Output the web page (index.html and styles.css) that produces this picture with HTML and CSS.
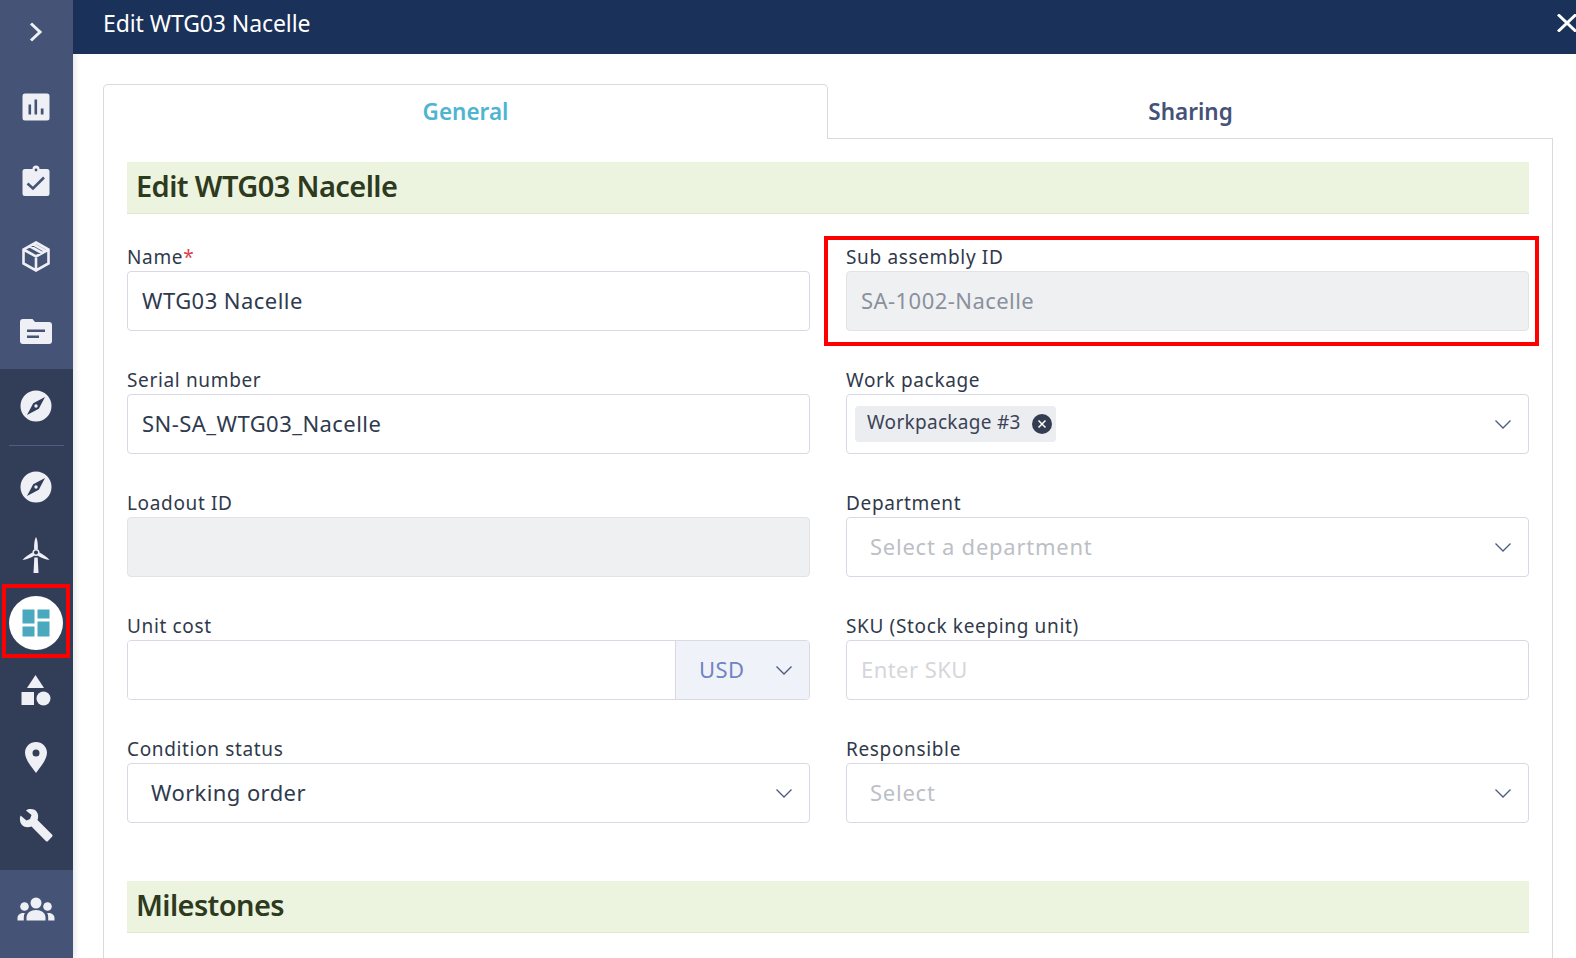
FILE: index.html
```html
<!DOCTYPE html>
<html lang="en">
<head>
<meta charset="utf-8">
<title>Edit WTG03 Nacelle</title>
<link rel="stylesheet" href="styles.css">
</head>
<body>
<div class="app">
  <nav class="sidebar">
    <div class="side-top">
      <div class="nav-toggle"><svg width="14" height="20" viewBox="0 0 14 20"><path d="M2 1.500 11 10 2 18.500" fill="none" stroke="#eef0f5" stroke-width="3"/></svg></div>
      <div class="nav-item"><svg width="28" height="28" viewBox="0 0 28 28"><rect x="0.5" y="0.5" width="27" height="27" rx="2.5" fill="#eef0f5"/><path d="M6.5 11.500h2.600v10H6.500zM12.500 6.500h2.600v15h-2.600zM18.800 15.500h2.700v6h-2.700z" fill="#455377"/></svg></div>
      <div class="nav-item nav-lift"><svg width="28" height="31" viewBox="0 0 28 31"><path d="M3 4h7.500a3.500 3.500 0 0 1 7 0H25a2.500 2.500 0 0 1 2.500 2.500v22A2.500 2.500 0 0 1 25 31H3a2.500 2.500 0 0 1-2.500-2.500v-22A2.500 2.500 0 0 1 3 4z" fill="#eef0f5"/><circle cx="14" cy="5" r="1.400" fill="#455377"/><path d="M5.500 18.500 11 23.500 22 12.500" fill="none" stroke="#455377" stroke-width="2.600"/></svg></div>
      <div class="nav-item"><svg width="28" height="31" viewBox="0 0 28 31"><path d="M14 1.500 26.500 8.500V22.500L14 29.500 1.500 22.500V8.500zM1.500 8.500 14 15.500 26.500 8.500M14 15.500V29.500M7.500 5 20 12M11 3.200 23.500 10.200" fill="none" stroke="#eef0f5" stroke-width="2.600"/></svg></div>
      <div class="nav-item"><svg width="32" height="25" viewBox="0 0 32 25"><path d="M3 0h9.500l2.500 3h14a3 3 0 0 1 3 3v16a3 3 0 0 1-3 3H3a3 3 0 0 1-3-3V3a3 3 0 0 1 3-3z" fill="#eef0f5"/><path d="M7 10.500h18v2.500H7zM7 16.500h12v2.500H7z" fill="#455377"/></svg></div>
    </div>
    <div class="side-mid">
      <div class="nav-item nav-first"><svg width="32" height="32" viewBox="0 0 32 32"><circle cx="16" cy="16" r="15.500" fill="#eef0f5"/><path d="M25 7 18.800 18.800 7 25 13.200 13.200z" fill="#323d58"/><circle cx="16" cy="16" r="1.700" fill="#eef0f5"/></svg></div>
      <div class="nav-sep"></div>
      <div class="nav-item nav-tight"><svg width="32" height="32" viewBox="0 0 32 32"><circle cx="16" cy="16" r="15.500" fill="#eef0f5"/><path d="M25 7 18.800 18.800 7 25 13.200 13.200z" fill="#323d58"/><circle cx="16" cy="16" r="1.700" fill="#eef0f5"/></svg></div>
      <div class="nav-item nav-tight"><svg width="28" height="36" viewBox="0 0 28 36"><path d="M14 0c1.800 3 2 9 1.800 12.500h-3.600C12 9 12.200 3 14 0zM27.500 23c-3.500-.3-8.500-2.400-11.700-4.300l1.800-3.100c3 2 7.500 4.400 9.900 7.400zM.5 23c2.400-3 6.900-5.400 9.900-7.400l1.800 3.100C9 20.600 4 22.700.5 23zM12.300 20.500h3.400l.8 15.500h-5z" fill="#eef0f5"/><circle cx="14" cy="15.500" r="2.800" fill="none" stroke="#eef0f5" stroke-width="1.500"/></svg></div>
      <div class="nav-item nav-tight">
        <div class="active-disc"><svg width="28" height="28" viewBox="0 0 28 28"><path d="M.5.500h12v14H.500zM15.500.500h12v9h-12zM15.500 12.500h12v15h-12zM.5 17.500h12v10H.500z" fill="#4aa8bf"/></svg></div>
        <div class="mark-nav"></div>
      </div>
      <div class="nav-item nav-tight nav-up"><svg width="30" height="31" viewBox="0 0 30 31"><path d="M14.500 0 23 13H6z" fill="#eef0f5"/><rect x="0.500" y="17" width="12.500" height="13" fill="#eef0f5"/><circle cx="22.500" cy="23.500" r="7" fill="#eef0f5"/></svg></div>
      <div class="nav-item nav-tight"><svg width="22" height="31" viewBox="0 0 22 31"><path fill-rule="evenodd" d="M11 0c6 0 11 4.600 11 10.800C22 17.500 15 25.500 11 31 7 25.500 0 17.500 0 10.800 0 4.600 5 0 11 0zm0 7.500a3.500 3.500 0 1 0 0 7 3.500 3.500 0 0 0 0-7z" fill="#eef0f5"/></svg></div>
      <div class="nav-item nav-tight"><svg width="34" height="34" viewBox="0 0 34 34"><path d="M1.500 7.500 7.500 12.500 11 11 12.500 7 7 2.500C10 .5 15 .5 17.500 3.500 19.500 6 19.500 9 18.500 12L33 26.500c.7.700.7 1.500 0 2.200L29 33c-.7.700-1.500.7-2.200 0L12.500 18.500C9 19.800 5.500 19.500 3 17 .8 14.500.3 10.500 1.500 7.500z" fill="#eef0f5"/></svg></div>
    </div>
    <div class="side-bottom">
      <svg width="38" height="24" viewBox="0 0 38 24"><circle cx="19" cy="6" r="5.500" fill="#eef0f5"/><path d="M9.500 23.500v-3c0-4.500 4-7.500 9.500-7.500s9.500 3 9.500 7.500v3z" fill="#eef0f5"/><circle cx="7.500" cy="9.500" r="4.300" fill="#eef0f5"/><circle cx="30.500" cy="9.500" r="4.300" fill="#eef0f5"/><path d="M.5 23.500v-2.500c0-3 2.500-5 6.500-5 .7 0 .8 0 .8 0-.8 1.500-1 3-1 4.500v3zM37.500 23.500v-2.500c0-3-2.500-5-6.500-5h-.8c.8 1.500 1 3 1 4.500v3z" fill="#eef0f5"/></svg>
    </div>
  </nav>
  <main class="main">
    <header class="topbar">
      <span class="topbar-title">Edit WTG03 Nacelle</span>
      <svg class="close" width="19" height="18" viewBox="0 0 19 18"><path d="M1 .5 19 17.500M19 .5 1 17.500" stroke="#fff" stroke-width="3" fill="none"/></svg>
    </header>
    <div class="content">
      <div class="tabs">
        <div class="tab tab-active">General</div>
        <div class="tab tab-idle">Sharing</div>
      </div>
      <div class="panel">
        <h2 class="section">Edit WTG03 Nacelle</h2>
        <div class="form">
          <div class="field">
            <label class="label">Name<span class="req">*</span></label>
            <input class="input" type="text" value="WTG03 Nacelle">
          </div>
          <div class="field">
            <label class="label">Sub assembly ID</label>
            <input class="input input-off" type="text" value="SA-1002-Nacelle" disabled>
            <div class="mark-field"></div>
          </div>
          <div class="field">
            <label class="label">Serial number</label>
            <input class="input" type="text" value="SN-SA_WTG03_Nacelle">
          </div>
          <div class="field">
            <label class="label">Work package</label>
            <div class="select select-chips">
              <span class="chip"><span class="chip-text">Workpackage #3</span>
                <svg class="chip-x" width="20" height="20" viewBox="0 0 20 20"><circle cx="10" cy="10" r="10" fill="#333c50"/><path d="M6.500 6.500l7 7M13.500 6.500l-7 7" stroke="#fff" stroke-width="1.500"/></svg>
              </span>
              <svg class="chev" width="16" height="9" viewBox="0 0 16 9"><path d="M.5.500 8 8 15.500.500" fill="none" stroke="#4a5a80" stroke-width="1.300"/></svg>
            </div>
          </div>
          <div class="field">
            <label class="label">Loadout ID</label>
            <input class="input input-off" type="text" disabled>
          </div>
          <div class="field">
            <label class="label">Department</label>
            <div class="select"><span class="ph">Select a department</span>
              <svg class="chev" width="16" height="9" viewBox="0 0 16 9"><path d="M.5.500 8 8 15.500.500" fill="none" stroke="#4a5a80" stroke-width="1.300"/></svg>
            </div>
          </div>
          <div class="field">
            <label class="label">Unit cost</label>
            <div class="group">
              <input class="group-input" type="text">
              <div class="addon"><span class="addon-text">USD</span>
                <svg class="chev" width="16" height="9" viewBox="0 0 16 9"><path d="M.5.500 8 8 15.500.500" fill="none" stroke="#4a5a80" stroke-width="1.300"/></svg>
              </div>
            </div>
          </div>
          <div class="field">
            <label class="label">SKU (Stock keeping unit)</label>
            <input class="input" type="text" placeholder="Enter SKU">
          </div>
          <div class="field">
            <label class="label">Condition status</label>
            <div class="select"><span class="val">Working order</span>
              <svg class="chev" width="16" height="9" viewBox="0 0 16 9"><path d="M.5.500 8 8 15.500.500" fill="none" stroke="#4a5a80" stroke-width="1.300"/></svg>
            </div>
          </div>
          <div class="field">
            <label class="label">Responsible</label>
            <div class="select"><span class="ph">Select</span>
              <svg class="chev" width="16" height="9" viewBox="0 0 16 9"><path d="M.5.500 8 8 15.500.500" fill="none" stroke="#4a5a80" stroke-width="1.300"/></svg>
            </div>
          </div>
        </div>
        <h2 class="section section-next">Milestones</h2>
      </div>
    </div>
  </main>
</div>
</body>
</html>
```
FILE: styles.css
```css
* { box-sizing: border-box; }
html, body { margin: 0; height: 100%; overflow: hidden; background: #fff; }
body { font-family: "Noto Sans", "Open Sans", sans-serif; color: #2f3a4f; }
.app { display: flex; width: 1576px; height: 958px; overflow: hidden; }

.sidebar { width: 73px; flex: none; display: flex; flex-direction: column; box-shadow: 2px 0 6px rgba(40,50,80,.12); position: relative; z-index: 1; }
.side-top { height: 369px; background: #455377; }
.side-mid { height: 501px; background: #323d58; }
.side-bottom { height: 88px; background: #455377; display: flex; align-items: center; justify-content: center; padding-bottom: 10px; padding-right: 1px; }
.nav-toggle { height: 64px; display: flex; align-items: center; justify-content: center; margin-bottom: 5.5px; padding-right: 1px; }
.nav-item { height: 74.75px; display: flex; align-items: center; justify-content: center; padding-right: 1px; position: relative; }
.nav-lift svg { margin-top: -3px; }
.nav-first { height: 74px; }
.nav-tight { height: 68px; }
.nav-up { margin-bottom: -2px; }
.nav-up svg { margin-top: -2px; }
.nav-sep { height: 1px; margin: 2px 9px 7px; background: #505d80; }
.active-disc { width: 54px; height: 54px; border-radius: 50%; background: #fff; display: flex; align-items: center; justify-content: center; }
.mark-nav { position: absolute; left: 2px; top: -5px; width: 68px; height: 74px; border: 4px solid #f00; }

.main { flex: 1; min-width: 0; display: flex; flex-direction: column; }
.topbar { height: 54px; flex: none; background: #1a3159; color: #fff; display: flex; align-items: center; justify-content: space-between; padding: 0 0 0 30px; }
.topbar-title { font-size: 23px; line-height: 46px; margin-top: -9px; letter-spacing: -.1px; }
.close { margin-top: -8px; }

.content { padding: 30px 23px 0 30px; }
.tabs { display: flex; height: 55px; }
.tab { font-size: 22.5px; font-weight: 600; text-align: center; line-height: 53px; }
.tab-active { width: 725px; flex: none; color: #4db5cf; border: 1px solid #d9d9e0; border-bottom: 0; border-radius: 5px 5px 0 0; }
.tab-idle { flex: 1; color: #44527a; border-bottom: 1px solid #d9d9e0; padding-top: 1px; }
.panel { border: 1px solid #d9d9e0; border-top: 0; border-bottom: 0; padding: 23px 23px 60px; }
.section { margin: 0; height: 52px; background: #ecf4e0; border-bottom: 1px solid #dfe8cd; color: #2e3a1e; font-size: 29px; font-weight: 600; line-height: 48px; letter-spacing: -.6px; padding-left: 9px; }
.section-next { margin-top: 58px; }
.form { display: grid; grid-template-columns: 1fr 1fr; column-gap: 36px; row-gap: 38px; margin-top: 32px; }
.field { position: relative; min-width: 0; }
.label { display: block; height: 25px; font-size: 19px; line-height: 22px; letter-spacing: .65px; color: #30394b; }
.req { color: #d9434e; }
.input, .select, .group { display: flex; align-items: center; width: 100%; height: 60px; border: 1px solid #d9d9e6; border-radius: 4px; background: #fff; font-family: inherit; font-size: 22px; letter-spacing: .45px; color: #2f3a4f; }
.input { padding: 0 14px 3px; outline: 0; }
.input::placeholder { color: #d6d6da; opacity: 1; }
.input-off { background: #eff0f2; color: #8a909c; border-color: #e2e3e7; }
.select { padding: 0 17px 0 23px; justify-content: space-between; }
.select-chips { padding-left: 8px; }
.chip { display: inline-flex; align-items: center; height: 36px; padding: 0 4px 0 12px; gap: 11px; background: #ecedf1; border-radius: 4px; font-size: 19px; letter-spacing: .3px; color: #3a4356; }
.chip-text { margin-top: -4px; }
.ph { color: #bcbfc6; letter-spacing: .75px; margin-top: -3px; }
.val { color: #2f3a4f; letter-spacing: .4px; margin-top: -3px; }
.group { overflow: hidden; }
.group-input { flex: 1; min-width: 0; height: 100%; border: 0; outline: 0; background: #fff; }
.addon { flex: none; width: 134px; height: 100%; display: flex; align-items: center; justify-content: space-between; padding: 0 17px 0 23px; background: #eff2f9; border-left: 1px solid #d9d9e6; }
.addon-text { color: #6f84c0; margin-top: -3px; }
.mark-field { position: absolute; left: -22px; top: -10px; width: 715px; height: 110px; border: 4px solid #f00; }
```
